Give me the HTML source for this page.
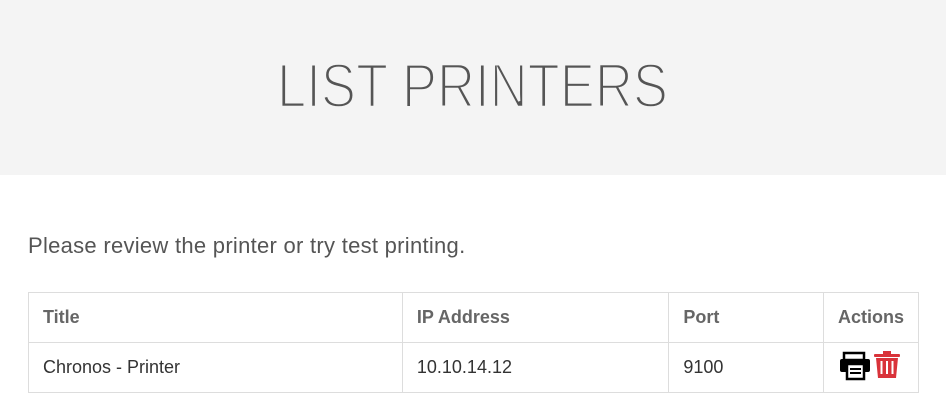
<!DOCTYPE html>
<html><head><style>
body{margin:0;width:946px;height:420px;background:#fff;font-family:"Liberation Sans",sans-serif;overflow:hidden}
.hd{height:175px;background:#f4f4f4;position:relative}
.hd svg{position:absolute;left:0;top:0}
p{position:absolute;left:28px;top:233px;margin:0;font-size:22px;color:#555;letter-spacing:0.28px}
table{position:absolute;left:28px;top:292px;border-collapse:collapse;width:891px}
td,th{border:1px solid #ddd;font-size:18px;text-align:left;padding:0 14px;height:49px}
th{color:#666;font-weight:bold}
td{color:#333}
</style></head><body>
<div class="hd"><svg width="946" height="175"><text x="277" y="107" textLength="391" lengthAdjust="spacingAndGlyphs" font-family="Liberation Sans" font-size="62" fill="#555" stroke="#f4f4f4" stroke-width="2.6">LIST PRINTERS</text></svg></div>
<p>Please review the printer or try test printing.</p>
<table>
<tr><th style="width:346px">Title</th><th style="width:238px">IP Address</th><th style="width:126px">Port</th><th>Actions</th></tr>
<tr><td>Chronos - Printer</td><td>10.10.14.12</td><td>9100</td><td style="padding:0 0 0 16px">
<svg width="62" height="32" viewBox="0 0 62 32">
<rect x="4" y="4" width="20" height="7" fill="none" stroke="#000" stroke-width="2.5"/>
<rect x="0" y="10" width="30" height="13" rx="2" fill="#000"/>
<rect x="7" y="15" width="17" height="15" fill="#fff" stroke="#000" stroke-width="2.5"/>
<rect x="10" y="19" width="11" height="2" fill="#000"/><rect x="10" y="23" width="11" height="2" fill="#000"/>
<rect x="34" y="5" width="26" height="3" rx="1" fill="#d9333a"/><rect x="43" y="2" width="8" height="4" fill="#d9333a"/>
<path d="M36 9h22l-2 20h-18z" fill="#d9333a"/>
<rect x="40.5" y="12" width="2" height="13" fill="#fff"/><rect x="46" y="12" width="2" height="13" fill="#fff"/><rect x="51.5" y="12" width="2" height="13" fill="#fff"/>
</svg></td></tr>
</table>
</body></html>
